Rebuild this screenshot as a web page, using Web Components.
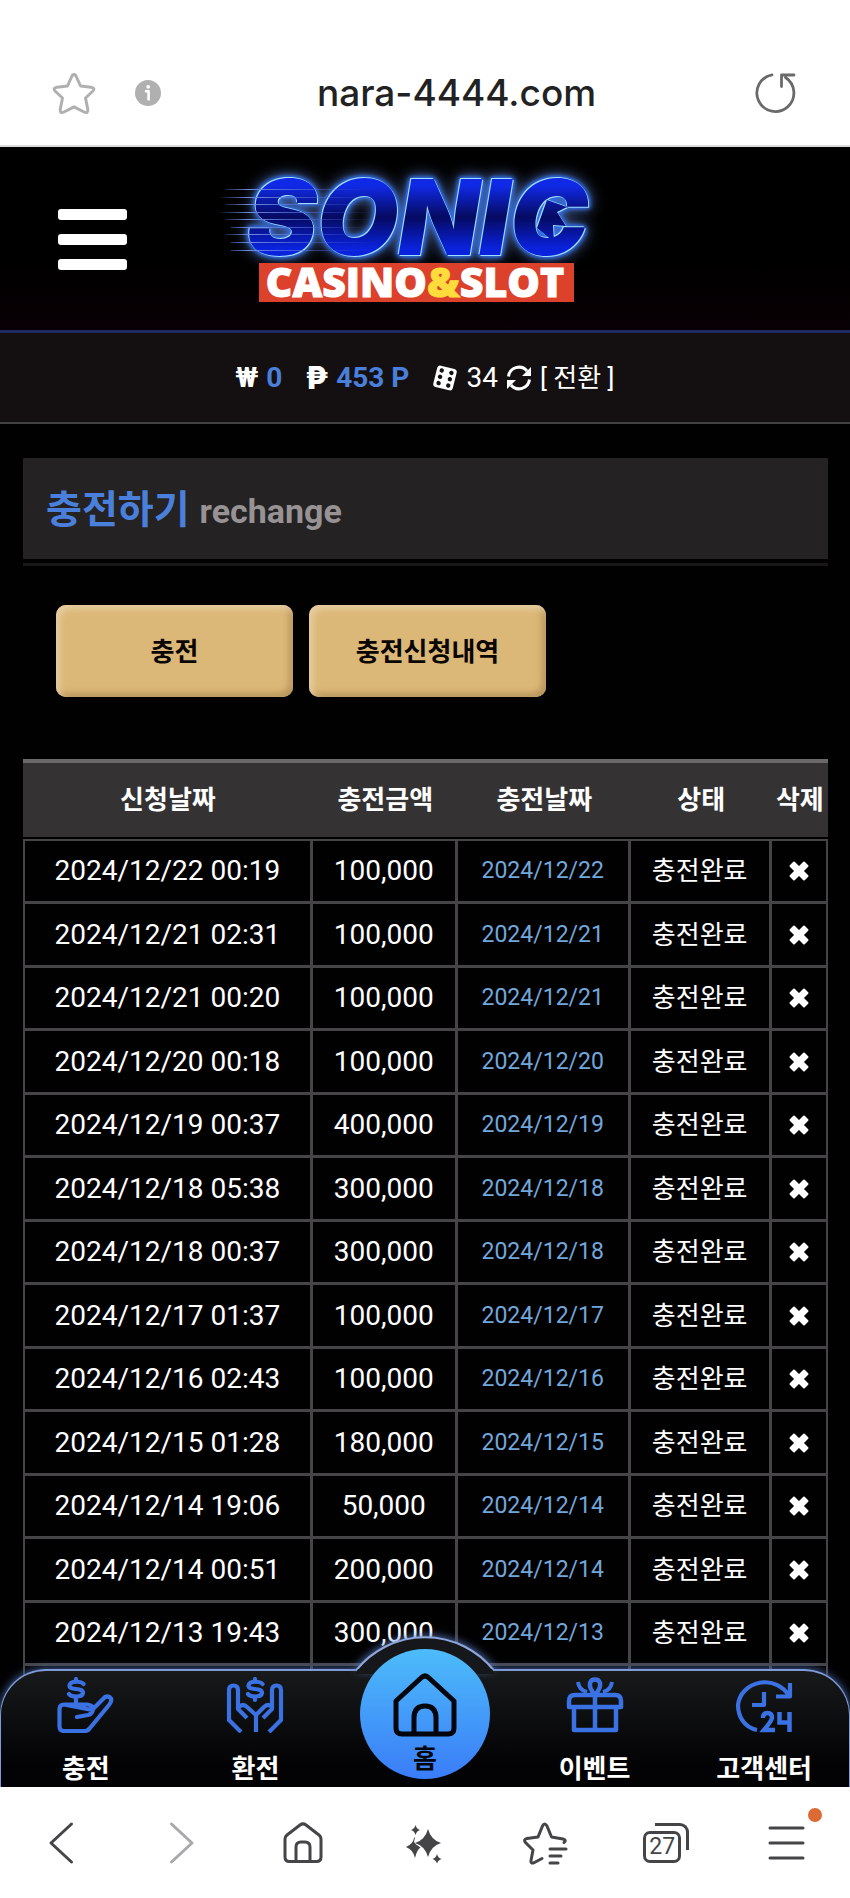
<!DOCTYPE html>
<html lang="ko">
<head>
<meta charset="utf-8">
<meta name="viewport" content="width=device-width, initial-scale=1">
<title>nara-4444.com</title>
<style>
  html, body { margin: 0; height: 100%; }
  body {
    background: #fff;
    font-family: Roboto, "Noto Sans CJK KR", sans-serif;
    font-size: 28px;
    color: #fff;
  }
</style>
</head>
<body>
<mobile-browser address="nara-4444.com">
  <site-header></site-header>
  <point-bar won="0" point="453 P" dice="34"></point-bar>
  <page-content>
    <page-title sub="rechange">충전하기</page-title>
    <button-row>
      <gold-button>충전</gold-button>
      <gold-button>충전신청내역</gold-button>
    </button-row>
    <charge-table></charge-table>
  </page-content>
  <bottom-nav slot="nav">
    <nav-item icon="handMoney">충전</nav-item>
    <nav-item icon="handsMoney">환전</nav-item>
    <nav-item icon="house" main>홈</nav-item>
    <nav-item icon="gift">이벤트</nav-item>
    <nav-item icon="clock24">고객센터</nav-item>
  </bottom-nav>
</mobile-browser>

<script>
const svg = (w, h, body) =>
  `<svg width="${w}" height="${h}" viewBox="0 0 ${w} ${h}" fill="none" stroke="currentColor" stroke-linecap="round" stroke-linejoin="round" aria-hidden="true">${body}</svg>`;

const ICONS = {
  star: svg(46, 46, `<path stroke-width="3" d="M23 4.500Q24.500 4.500 25.500 7L29.500 16 40 17.200Q45 18 41.500 21.500L34.500 28 36.800 39.500Q37 44 33 42L23 36.800 13 42Q9 44 9.200 39.500L11.500 28 4.500 21.500Q1 18 6 17.200L16.500 16 20.500 7Q21.500 4.500 23 4.500Z"/>`),
  info: svg(26, 26, `<circle cx="13" cy="13" r="13" fill="currentColor" stroke="none"/><path stroke="#fff" stroke-width="2.600" stroke-linecap="butt" d="M10 11.300H13.600V20.500"/><circle cx="13.200" cy="6.800" r="1.900" fill="#fff" stroke="none"/>`),
  reload: svg(44, 44, `<path stroke-width="2.800" d="M18 3.800A18.500 18.500 0 1 0 31.500 6.500M27.500 15.500V4H40"/>`),
  dice: svg(26, 26, `<g transform="rotate(14 13 13)"><rect x="3" y="2" width="20" height="22" rx="3" fill="currentColor" stroke="none"/><g fill="#141012" stroke="none"><circle cx="8" cy="6.500" r="2.200"/><circle cx="8" cy="13" r="2.200"/><circle cx="8" cy="19.500" r="2.200"/><circle cx="18" cy="6.500" r="2.200"/><circle cx="18" cy="13" r="2.200"/><circle cx="18" cy="19.500" r="2.200"/></g></g>`),
  sync: svg(26, 26, `<path stroke-width="3" stroke-linecap="butt" d="M2.500 11.500A10.500 10.500 0 0 1 21 6M23.500 14.500A10.500 10.500 0 0 1 5 20"/><path fill="currentColor" stroke="none" d="M25 2V11H16ZM1 24V15H10Z"/>`),
  cross: svg(20, 20, `<path fill="currentColor" stroke-width="2" d="M5 1.500 10 6.500 15 1.500 18.500 5 13.500 10 18.500 15 15 18.500 10 13.500 5 18.500 1.500 15 6.500 10 1.500 5Z"/>`),
  handMoney: svg(58, 56, `<g stroke-width="4.200"><path d="M26.500 7C24.500 4.500 13.500 3 12.500 8.500 12 14 26 10 26 16 25 21 14 20 12 17M19 2V4M19 21V26"/><path d="M7 27.500H30Q36 28 36 32.500 35 37 31 38L20 40M35 33 48 20Q52 18.500 54 21.500 55 24.500 52 28L33 51Q31 54 28 54H7Q2.500 54 2.500 49V32Q2.500 27.500 7 27.500Z"/></g>`),
  handsMoney: svg(58, 56, `<g stroke-width="4.200"><path d="M36.500 7C34.500 4.500 23.500 3 22.500 8.500 22 14 36 10 36 16 35 21 24 20 22 17M29 2V4M29 21V23"/><path stroke-linecap="butt" d="M15 55 3 43V13Q3 8.500 7.500 8.500 12 8.500 12 13V32L21 41M13 30Q17 26 21 30L30 38V55M43 55 55 43V13Q55 8.500 50.500 8.500 46 8.500 46 13V32L37 41M46 30Q42 26 38 30L30 38"/></g>`),
  house: svg(66, 66, `<path stroke-width="5" d="M4 29 29 6Q33 2 37 6L62 29V56Q62 62 56 62H10Q4 62 4 56ZM22 62V46Q22 34 33 34 44 34 44 46V62"/>`),
  gift: svg(58, 56, `<g stroke-width="4.500" stroke-linecap="butt"><path d="M3 30V24Q3 18 9 18H49Q55 18 55 24V30ZM8 30V53H50V30M29 18V53M29 18Q23 11 24 6 25 2.500 29 2.500 33 2.500 34 6 35 11 29 18Z"/><path stroke-width="4" d="M12 5Q13 13 21 15M46 5Q45 13 37 15"/></g>`),
  clock24: svg(58, 56, `<g stroke-width="4.200" stroke-linecap="butt"><path d="M22 53C8 50 3 38 3 28A27 25 0 0 1 54 19M55 6V19.500H41M29 15V28H17"/><path stroke-width="4.500" stroke-linejoin="miter" d="M28 41Q28 36 32.500 36 37 36 37 41 36.500 44 29 53H40M44.500 35V45.500H55M54.500 35V55"/></g>`),
  back: svg(26, 44, `<path stroke-width="3" d="M23.500 3 3 22 23.500 41"/>`),
  forward: svg(26, 44, `<path stroke-width="3" d="M2.500 3 23 22 2.500 41"/>`),
  home: svg(40, 42, `<path stroke-width="3" d="M2 17Q2 14.500 4 13L17 3Q20 .8 23 3L36 13Q38 14.500 38 17V35Q38 39.500 33.500 39.500H6.500Q2 39.500 2 35ZM13 39V25Q13 20 18 20H22Q27 20 27 25V39"/>`),
  sparkle: svg(40, 44, `<g fill="currentColor" stroke="none"><path d="M24 8Q27 19 37 22 27 25 24 36 21 25 11 22 21 19 24 8Z"/><path d="M11 16L10 21Q11 23 16.500 26.500 13 28.500 11 37 9 28.500 2 26 9 23 10 17Z"/><path d="M11.500 4Q12.500 8 16 9 12.500 10 11.500 14 10.500 10 7 9 10.500 8 11.500 4ZM33 33Q34 37 37.500 38 34 39 33 42.500 32 39 28.500 38 32 37 33 33Z"/></g>`),
  bookmarks: svg(46, 44, `<path stroke-width="3" d="M20 37.500 11.500 42Q8.500 42.500 9 39.500L11 29 3.500 21.500Q1 18.500 5 17.500L16 16 20.500 5Q22.500 1 25 5L29.500 16 41 18Q45 19 42 21.500M28 28H44M28 35H39M28 42H36"/>`),
  menu: svg(40, 40, `<path stroke-width="3" d="M3 5H36M3 20H36M3 35H36"/>`)
};

class UiIcon extends HTMLElement {
  connectedCallback() {
    this.attachShadow({ mode: "open" }).innerHTML = `
      <style>
        :host { display: block; flex: none; }
        svg { display: block; }
      </style>
      ${ICONS[this.getAttribute("name")]}
    `;
  }
}

class MobileBrowser extends HTMLElement {
  connectedCallback() {
    this.attachShadow({ mode: "open" }).innerHTML = `
      <style>
        :host {
          display: flex;
          flex-direction: column;
          height: 100vh;
          overflow: hidden;
        }
        .address {
          display: grid;
          grid-template-columns: 1fr auto 1fr;
          align-items: center;
          box-sizing: border-box;
          flex: none;
          height: 147px;
          padding: 40px 52px 0 51px;
          border-bottom: 2px solid #dcdcdc;
          background: #fff;
          color: #b0b0b0;
        }
        .left { display: flex; align-items: center; gap: 38px; }
        .right { justify-self: end; color: #6a6a6a; }
        button {
          display: block;
          padding: 0;
          border: 0;
          background: none;
          color: inherit;
          font: inherit;
        }
        .url {
          margin-left: 64px;
          color: #222;
          font: 500 37px/48px Inter, sans-serif;
        }
        .viewport {
          position: relative;
          flex: 1;
          min-height: 0;
          overflow: hidden;
          background: #020102;
        }
        .nav { position: absolute; left: 0; right: 0; bottom: 0; }
        .toolbar {
          display: grid;
          grid-template-columns: repeat(7, 1fr);
          align-items: center;
          justify-items: center;
          flex: none;
          height: 111px;
          padding-right: 2px;
          background: #fff;
          color: #454548;
        }
        .toolbar .off { color: #a9a9ab; }
        .tabs, .more { position: relative; }
        .tabs { width: 46px; height: 40px; }
        .tabs::before {
          content: "";
          position: absolute;
          top: 0;
          right: 0;
          width: 31px;
          height: 24px;
          border: solid #454548;
          border-width: 3px 3px 0 0;
          border-radius: 0 9px 0 0;
        }
        .tabs span {
          position: absolute;
          left: 0;
          bottom: 0;
          width: 32px;
          border: 3px solid #454548;
          border-radius: 7px;
          background: #fff;
          font-size: 23px;
          line-height: 26px;
          text-align: center;
        }
        .more::after {
          content: "";
          position: absolute;
          top: -15px;
          right: -15px;
          width: 14px;
          height: 14px;
          border-radius: 50%;
          background: #dc6a34;
        }
      </style>
      <div class="address">
        <div class="left">
          <button aria-label="즐겨찾기"><ui-icon name="star"></ui-icon></button>
          <button aria-label="정보"><ui-icon name="info"></ui-icon></button>
        </div>
        <button class="url">${this.getAttribute("address")}</button>
        <button class="right" aria-label="새로고침"><ui-icon name="reload"></ui-icon></button>
      </div>
      <div class="viewport">
        <slot></slot>
        <div class="nav"><slot name="nav"></slot></div>
      </div>
      <div class="toolbar">
        <button aria-label="뒤로"><ui-icon name="back"></ui-icon></button>
        <button class="off" aria-label="앞으로"><ui-icon name="forward"></ui-icon></button>
        <button aria-label="홈"><ui-icon name="home"></ui-icon></button>
        <button aria-label="AI"><ui-icon name="sparkle"></ui-icon></button>
        <button aria-label="북마크"><ui-icon name="bookmarks"></ui-icon></button>
        <button class="tabs" aria-label="탭"><span>27</span></button>
        <button class="more" aria-label="메뉴"><ui-icon name="menu"></ui-icon></button>
      </div>
    `;
  }
}

class SiteHeader extends HTMLElement {
  connectedCallback() {
    this.attachShadow({ mode: "open" }).innerHTML = `
      <style>
        :host {
          display: grid;
          grid-template-columns: 1fr auto 1fr;
          align-items: center;
          height: 183px;
          border-bottom: 3px solid #1f2a63;
          background: linear-gradient(#000, #000 60%, #080004);
        }
        .menu {
          display: grid;
          gap: 14px;
          width: 69px;
          margin: 2px 0 0 58px;
          padding: 0;
          border: 0;
          background: none;
        }
        .menu i { height: 11px; border-radius: 3px; background: #fff; }
        a { display: block; text-decoration: none; }
        svg { display: block; overflow: visible; }
        .sonic {
          fill: url(#face);
          filter:
            drop-shadow(1px 1px 0 #9fdcff) drop-shadow(-1px -1px 0 #9fdcff)
            drop-shadow(0 0 2px #2f6fe8) drop-shadow(0 0 2px #2f6fe8)
            drop-shadow(0 0 7px #4a66a8);
        }
        .sonic text { font: italic 900 105px Inter, sans-serif; }
        .sub { font: 800 41px "Open Sans", sans-serif; fill: #fff; stroke: #fff; stroke-width: 1; }
        .sub tspan { fill: #ffdc3c; stroke: #ffdc3c; }
      </style>
      <button class="menu" aria-label="메뉴"><i></i><i></i><i></i></button>
      <a href="#" aria-label="홈">
        <svg width="400" height="157" viewBox="0 0 400 157">
          <defs>
            <linearGradient id="face" gradientUnits="userSpaceOnUse" x1="0" y1="18" x2="0" y2="96">
              <stop offset=".1" stop-color="#1029e6"/>
              <stop offset=".5" stop-color="#050a60"/>
              <stop offset=".9" stop-color="#0a22dc"/>
            </linearGradient>
            <linearGradient id="fade" gradientUnits="userSpaceOnUse" x1="-8" x2="150" y1="0" y2="0">
              <stop offset="0" stop-color="#5b78c8" stop-opacity="0"/>
              <stop offset=".2" stop-color="#6f8ce0"/>
              <stop offset="1" stop-color="#3f5be0" stop-opacity="0"/>
            </linearGradient>
          </defs>
          <g class="sonic">
            <text x="22" y="95">SONIC</text>
            <path d="M322 40 342 47 332 52 341 66 328 65 329 82 312 68Z"/>
          </g>
          <path stroke="url(#fade)" stroke-width="1" d="M0 29.500H150M-4 37.500H150M0 44.500H150M-7 52.500H150M0 59.500H150M6 67.500H150M0 74.500H150M6 82.500H150M6 90.500H150"/>
          <rect x="34" y="103" width="315" height="39" fill="#dc412c"/>
          <text class="sub" x="190" y="137" text-anchor="middle">CASINO<tspan>&amp;</tspan>SLOT</text>
        </svg>
      </a>
    `;
  }
}

class PointBar extends HTMLElement {
  connectedCallback() {
    this.attachShadow({ mode: "open" }).innerHTML = `
      <style>
        :host {
          display: flex;
          align-items: center;
          justify-content: center;
          gap: 23px;
          height: 89px;
          border-bottom: 2px solid #434142;
          background: #141012;
          line-height: 36px;
        }
        div { display: flex; align-items: center; gap: 8px; }
        b { color: #4a80dc; }
        .peso { font: 800 31px/36px Inter, sans-serif; }
        button {
          padding: 0;
          border: 0;
          background: none;
          color: #fff;
          font: inherit;
          font-size: 26px;
        }
      </style>
      <div><strong>₩</strong><b>${this.getAttribute("won")}</b></div>
      <div><strong class="peso">₱</strong><b>${this.getAttribute("point")}</b></div>
      <div>
        <ui-icon name="dice"></ui-icon>
        <span>${this.getAttribute("dice")}</span>
        <ui-icon name="sync"></ui-icon>
        <button>[ 전환 ]</button>
      </div>
    `;
  }
}

class PageContent extends HTMLElement {
  connectedCallback() {
    this.attachShadow({ mode: "open" }).innerHTML = `
      <style>
        :host { display: block; padding: 34px 22px 0 23px; }
      </style>
      <slot></slot>
    `;
  }
}

class PageTitle extends HTMLElement {
  connectedCallback() {
    this.attachShadow({ mode: "open" }).innerHTML = `
      <style>
        :host {
          display: block;
          padding-bottom: 4px;
          border-bottom: 3px solid #1a1718;
        }
        h1 {
          display: flex;
          align-items: baseline;
          gap: 10px;
          margin: 0;
          padding: 20px 23px 16px;
          background: #252223;
          color: #4a80dc;
          font-size: 39px;
          line-height: 64px;
        }
        small { color: #979294; font-size: 34px; }
      </style>
      <h1><slot></slot><small>${this.getAttribute("sub")}</small></h1>
    `;
  }
}

class ButtonRow extends HTMLElement {
  connectedCallback() {
    this.attachShadow({ mode: "open" }).innerHTML = `
      <style>
        :host { display: flex; gap: 16px; padding: 39px 33px 62px; }
      </style>
      <slot></slot>
    `;
  }
}

class GoldButton extends HTMLElement {
  connectedCallback() {
    this.attachShadow({ mode: "open" }).innerHTML = `
      <style>
        :host { display: block; }
        button {
          display: block;
          width: 237px;
          height: 92px;
          padding: 0 0 4px;
          border: 0;
          border-radius: 10px;
          background: #dcb878;
          box-shadow: inset 4px 4px 6px #e6cda2, inset -4px -4px 6px #b8955c;
          color: #0a0604;
          font: inherit;
          font-size: 26px;
          font-weight: 700;
        }
      </style>
      <button><slot></slot></button>
    `;
  }
}

const CHARGES = [
  ["2024/12/22 00:19", "100,000"],
  ["2024/12/21 02:31", "100,000"],
  ["2024/12/21 00:20", "100,000"],
  ["2024/12/20 00:18", "100,000"],
  ["2024/12/19 00:37", "400,000"],
  ["2024/12/18 05:38", "300,000"],
  ["2024/12/18 00:37", "300,000"],
  ["2024/12/17 01:37", "100,000"],
  ["2024/12/16 02:43", "100,000"],
  ["2024/12/15 01:28", "180,000"],
  ["2024/12/14 19:06", "50,000"],
  ["2024/12/14 00:51", "200,000"],
  ["2024/12/13 19:43", "300,000"]
];

class ChargeTable extends HTMLElement {
  connectedCallback() {
    const rows = CHARGES.map(([date, amount]) => `
      <tr>
        <td>${date}</td>
        <td>${amount}</td>
        <td class="day">${date.split(" ")[0]}</td>
        <td class="state">충전완료</td>
        <td><button aria-label="삭제"><ui-icon name="cross"></ui-icon></button></td>
      </tr>`).join("");

    this.attachShadow({ mode: "open" }).innerHTML = `
      <style>
        :host { display: block; }
        table {
          width: 100%;
          table-layout: fixed;
          border-spacing: 0;
          text-align: center;
        }
        col:nth-child(1) { width: 36%; }
        col:nth-child(2) { width: 18%; }
        col:nth-child(3) { width: 21.5%; }
        col:nth-child(4) { width: 17.5%; }
        col:nth-child(5) { width: 7%; }
        th, td { padding: 0; white-space: nowrap; }
        th {
          height: 68px;
          padding-bottom: 6px;
          border-top: 4px solid #6b686a;
          border-bottom: 2px solid #020102;
          background: #353234;
          font-size: 26px;
        }
        td {
          height: 60px;
          border: solid #464446;
          border-width: 0 3px 3px 0;
          background: #020102;
          line-height: 36px;
        }
        tr:nth-child(even) td { height: 61px; }
        tr:first-child td { border-top-width: 2px; }
        td:first-child { border-left-width: 2px; }
        td:last-child { border-right-width: 2px; }
        .day { color: #72a7dc; font-size: 23px; }
        .state { font-size: 26px; }
        button {
          display: block;
          margin: auto;
          padding: 0;
          border: 0;
          background: none;
          color: #fff;
        }
      </style>
      <table>
        <colgroup><col><col><col><col><col></colgroup>
        <thead>
          <tr><th>신청날짜</th><th>충전금액</th><th>충전날짜</th><th>상태</th><th>삭제</th></tr>
        </thead>
        <tbody>
          ${rows}
          <tr><td></td><td></td><td></td><td></td><td></td></tr>
        </tbody>
      </table>
    `;
  }
}

class BottomNav extends HTMLElement {
  connectedCallback() {
    this.attachShadow({ mode: "open" }).innerHTML = `
      <style>
        :host { display: block; position: relative; }
        nav {
          display: grid;
          grid-template-columns: repeat(5, 1fr);
          box-sizing: border-box;
          height: 118px;
          border: solid #7f9ad8;
          border-width: 2px 1px 0;
          border-radius: 46px 46px 0 0;
          background: linear-gradient(#17191a, #030305 80%);
          box-shadow: 0 0 10px #4a6db0;
        }
        /* raised arc behind the home button, hides the bar's own top line */
        .bump {
          position: absolute;
          top: -41px;
          left: calc(50% - 100px);
          overflow: visible;
        }
        .bump .glow { filter: drop-shadow(0 0 5px #5a80c8); }
      </style>
      <nav>
        <svg class="bump" width="200" height="60" viewBox="0 0 200 60" fill="none" aria-hidden="true">
          <path class="glow" fill="#15171a" stroke="#8fa6dc" stroke-width="2" d="M31.500 42A88 88 0 0 1 168.500 42"/>
          <path fill="#15171a" d="M33 41H167L170 46H30Z"/>
        </svg>
        <slot></slot>
      </nav>
    `;
  }
}

class NavItem extends HTMLElement {
  connectedCallback() {
    this.attachShadow({ mode: "open" }).innerHTML = `
      <style>
        :host { display: block; position: relative; }
        a {
          display: flex;
          flex-direction: column;
          align-items: center;
          gap: 18px;
          padding-top: 6px;
          color: #fff;
          font-size: 26px;
          font-weight: 700;
          line-height: 36px;
          white-space: nowrap;
          text-decoration: none;
        }
        ui-icon { color: #3a72e4; }
        :host([main]) a {
          position: absolute;
          top: -22px;
          left: calc(50% - 65px);
          box-sizing: border-box;
          width: 130px;
          height: 130px;
          gap: 3px;
          padding-top: 23px;
          border-radius: 50%;
          background: linear-gradient(#4dbcfa, #3a7cf8);
          color: #04060e;
        }
        :host([main]) ui-icon { color: #04060e; }
      </style>
      <a href="#"><ui-icon name="${this.getAttribute("icon")}"></ui-icon><span><slot></slot></span></a>
    `;
  }
}

customElements.define("ui-icon", UiIcon);
customElements.define("mobile-browser", MobileBrowser);
customElements.define("site-header", SiteHeader);
customElements.define("point-bar", PointBar);
customElements.define("page-content", PageContent);
customElements.define("page-title", PageTitle);
customElements.define("button-row", ButtonRow);
customElements.define("gold-button", GoldButton);
customElements.define("charge-table", ChargeTable);
customElements.define("bottom-nav", BottomNav);
customElements.define("nav-item", NavItem);
</script>
</body>
</html>
